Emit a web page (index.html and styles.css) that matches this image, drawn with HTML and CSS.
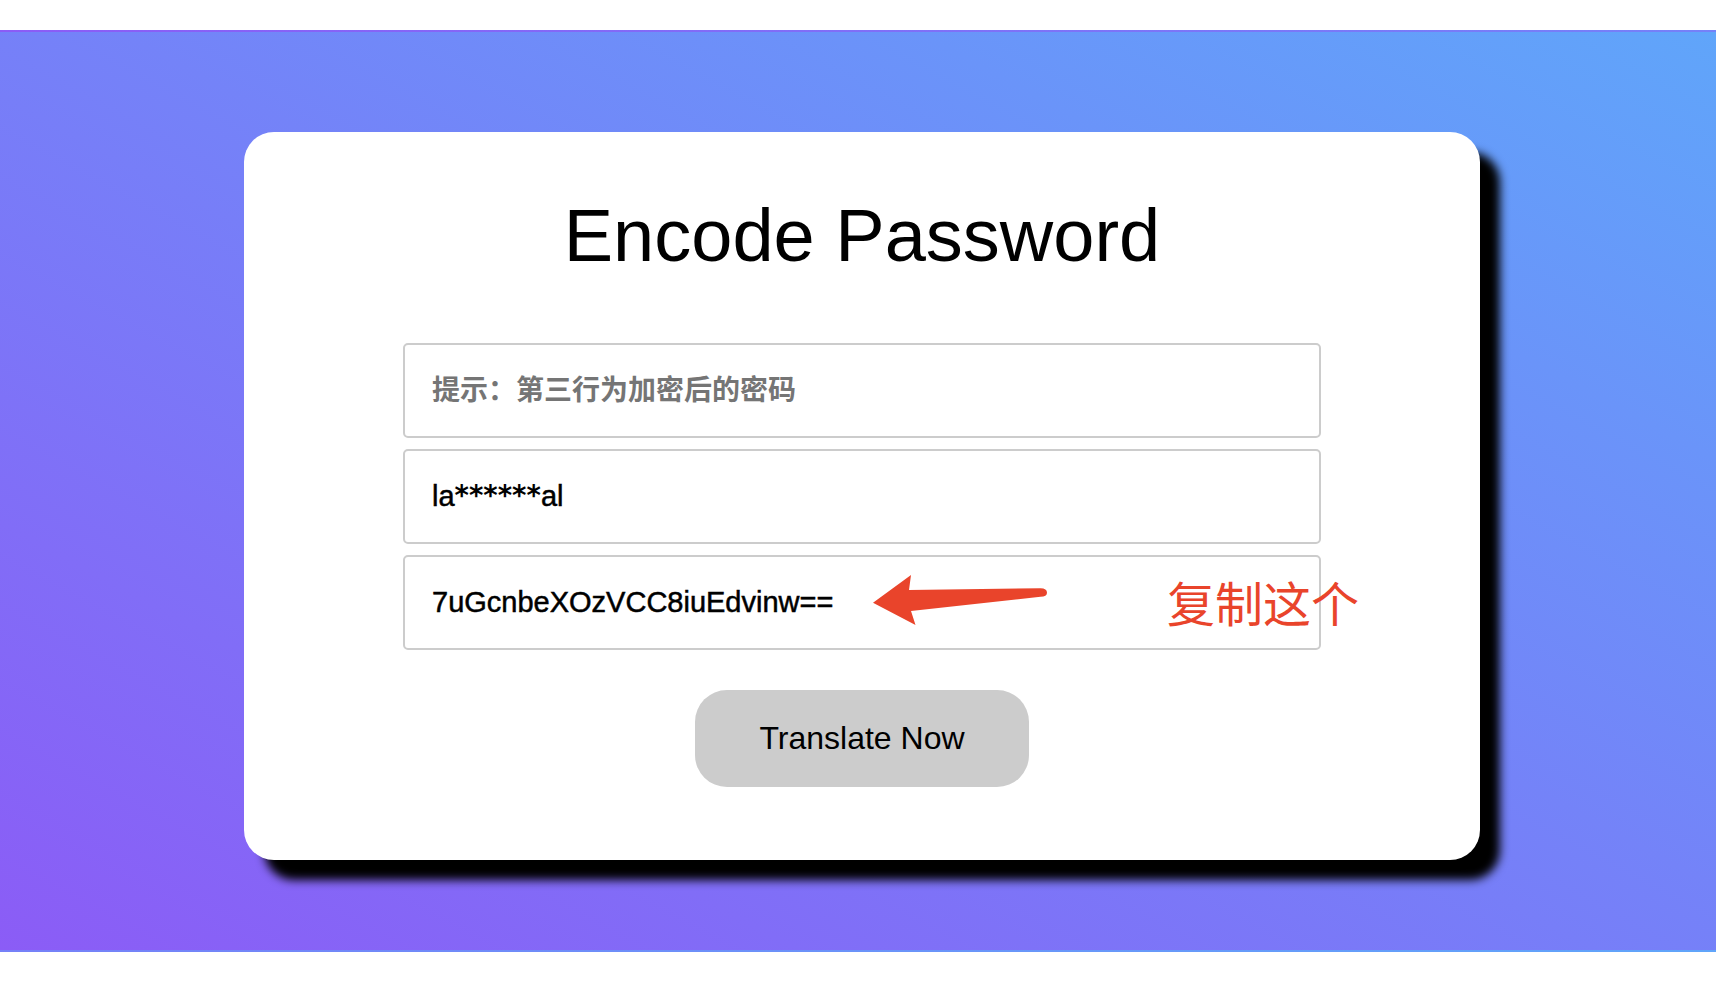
FILE: index.html
```html
<!DOCTYPE html>
<html lang="zh">
<head>
<meta charset="utf-8">
<title>Encode Password</title>
<link rel="stylesheet" href="styles.css">
</head>
<body>
<div class="band">
  <div class="card">
    <h1 class="title">Encode Password</h1>
    <div class="fields">
      <input class="field" type="text" placeholder="提示：第三行为加密后的密码">
      <div class="field field-static">la<span class="stars">******</span>al</div>
      <div class="field-wrap">
        <input class="field" type="text" value="7uGcnbeXOzVCC8iuEdvinw==">
        <svg class="arrow" width="176" height="51" viewBox="0 0 176 51">
          <path d="M0 27.7 L38 0 L36 15 L167.5 13.3 Q174 13.5 174 17.7 Q174 21.7 167.5 21.7 L38 36 L42.5 50 Z" fill="#e9442b"/>
        </svg>
        <span class="note">复制这个</span>
      </div>
    </div>
    <button class="btn" type="button">Translate Now</button>
  </div>
</div>
</body>
</html>
```

FILE: styles.css
```css
html, body {
  margin: 0;
  background: #fff;
}

body {
  padding-top: 30px;
  font-family: "Liberation Sans", Arial, "Noto Sans CJK SC", sans-serif;
}

.band {
  height: 922px;
  box-sizing: border-box;
  padding: 102px 0 0 8px;
  display: flex;
  justify-content: center;
  align-items: flex-start;
  background-image: linear-gradient(to top right, #8b5cf6, #60a5fa);
  background-size: 100% 918px;
  background-position: 0 2px;
  background-repeat: repeat-y;
}

.card {
  width: 1236px;
  box-sizing: border-box;
  background: #fff;
  border-radius: 30px;
  box-shadow: 20px 20px 10px #000;
  padding: 66px 0 73px;
  display: flex;
  flex-direction: column;
  align-items: center;
}

.title {
  margin: 0;
  font-size: 74px;
  line-height: 75px;
  font-weight: normal;
  color: #000;
}

.fields {
  margin-top: 70px;
  width: 918px;
  display: flex;
  flex-direction: column;
  gap: 11px;
}

.field {
  display: block;
  box-sizing: border-box;
  width: 100%;
  height: 95px;
  margin: 0;
  border: 2px solid #cccccc;
  border-radius: 5px;
  padding: 0 0 0 27px;
  font-family: "Liberation Sans", Arial, "Noto Sans CJK SC", sans-serif;
  font-size: 29px;
  color: #000;
  background: #fff;
  outline: none;
  -webkit-text-stroke: 0.5px #000;
}

.field-static {
  display: flex;
  align-items: center;
  line-height: 1;
}

.stars {
  font-family: "DejaVu Sans", sans-serif;
  font-weight: bold;
  font-size: 27.5px;
  -webkit-text-stroke: 0;
  position: relative;
  top: -1px;
}

.field::placeholder {
  color: #757575;
  font-size: 28px;
  font-weight: bold;
  -webkit-text-stroke: 0;
}

.field-wrap {
  position: relative;
}

.arrow {
  position: absolute;
  left: 470px;
  top: 20px;
}

.note {
  position: absolute;
  left: 764px;
  top: 22px;
  font-family: "Noto Sans CJK SC", sans-serif;
  font-size: 48px;
  line-height: 48px;
  color: #e9442b;
  white-space: nowrap;
  -webkit-text-stroke: 0;
}

.btn {
  margin-top: 40px;
  width: 334px;
  height: 97px;
  padding: 0;
  border: none;
  border-radius: 32px;
  background: #cccccc;
  font-family: "Liberation Sans", Arial, sans-serif;
  font-size: 32px;
  color: #000;
}
```
